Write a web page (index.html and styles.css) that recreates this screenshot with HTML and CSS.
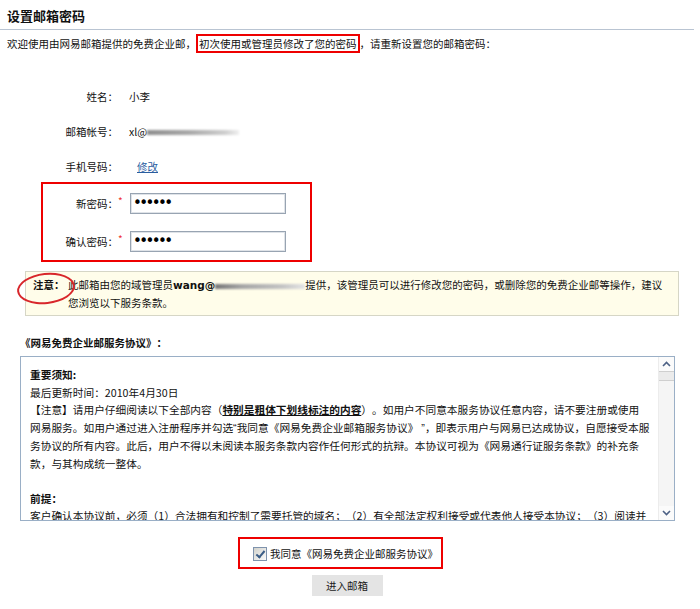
FILE: index.html
```html
<!DOCTYPE html>
<html lang="zh-CN">
<head>
  <meta charset="UTF-8" />
  <title>设置邮箱密码</title>
  <link rel="stylesheet" href="styles.css">
</head>
<body>
  <div class="page">
    <h1 class="page-title">设置邮箱密码</h1>
    <p class="intro">欢迎使用由网易邮箱提供的免费企业邮，<span class="mark">初次使用或管理员修改了您的密码</span>，请重新设置您的邮箱密码：</p>

    <!-- account info -->
    <div class="info">
      <div class="row"><span class="label">姓名：</span><span class="value">小李</span></div>
      <div class="row"><span class="label">邮箱帐号：</span><span class="value">xl@<span class="masked"></span></span></div>
      <div class="row"><span class="label">手机号码：</span><a class="value link" href="#">修改</a></div>
    </div>

    <!-- new password -->
    <div class="pwd-box">
      <div class="row">
        <label class="label" for="newPwd">新密码：</label><span class="req">*</span>
        <input id="newPwd" class="pwd" type="password" value="123456" />
      </div>
      <div class="row">
        <label class="label" for="confirmPwd">确认密码：</label><span class="req">*</span>
        <input id="confirmPwd" class="pwd" type="password" value="123456" />
      </div>
    </div>

    <div class="notice">
      <strong class="notice-tag">注意：</strong>
      <p class="notice-text">此邮箱由您的域管理员<b class="admin">wang@</b><span class="masked masked-domain"></span>提供，该管理员可以进行修改您的密码，或删除您的免费企业邮等操作，建议您浏览以下服务条款。</p>
      <span class="ring"></span>
    </div>

    <h2 class="terms-title">《网易免费企业邮服务协议》：</h2>
    <div class="terms">
      <!-- pre-wrapped agreement text -->
      <div class="terms-body">
        <p><b>重要须知:</b><br>
        最后更新时间：2010年4月30日<br>
        【注意】请用户仔细阅读以下全部内容（<b class="u">特别是粗体下划线标注的内容</b>）。如用户不同意本服务协议任意内容，请不要注册或使用<br>
        网易服务。如用户通过进入注册程序并勾选<span class="q">“</span>我同意《网易免费企业邮箱服务协议》<span class="q q-close">”</span>，即表示用户与网易已达成协议，自愿接受本服<br>
        务协议的所有内容。此后，用户不得以未阅读本服务条款内容作任何形式的抗辩。本协议可视为《网易通行证服务条款》的补充条<br>
        款，与其构成统一整体。</p>
        <p><b>前提：</b><br>
        客户确认本协议前，必须（1）合法拥有和控制了需要托管的域名；（2）有全部法定权利接受或代表他人接受本协议；（3）阅读并<br>
        理解本协议的全部条款。</p>
      </div>
      <div class="scrollbar">
        <span class="sb-btn"><svg width="9" height="6" viewBox="0 0 9 6"><polyline points="1,5 4.5,1.5 8,5" fill="none" stroke="#4d6185" stroke-width="1.6"/></svg></span>
        <span class="sb-thumb"></span>
        <span class="sb-track"></span>
        <span class="sb-btn"><svg width="9" height="6" viewBox="0 0 9 6"><polyline points="1,1 4.5,4.5 8,1" fill="none" stroke="#4d6185" stroke-width="1.6"/></svg></span>
      </div>
    </div>

    <div class="agree">
      <label class="agree-box"><input type="checkbox" class="agree-check" checked />我同意《网易免费企业邮服务协议》</label>
    </div>
    <div class="actions">
      <button type="submit" class="enter">进入邮箱</button>
    </div>
  </div>
</body>
</html>
```

FILE: styles.css
```css
body {
  margin: 0;
  background: #fff;
  color: #111;
  font-family: "Noto Sans CJK SC", "Liberation Sans", sans-serif;
  font-size: 10.5px;
  /* keep full-width punctuation at full width */
  text-spacing-trim: space-all;
}
.page {
  width: 694px;
}
/* header */
.page-title {
  margin: 0;
  padding: 8px 0 5px 7px;
  font-size: 13px;
  line-height: 16px;
  font-weight: bold;
  border-bottom: 1px solid #b9c4d2;
}
.intro {
  margin: 5px 0 0 7px;
  line-height: 18px;
}
.mark {
  border: 2px solid #e00;
  padding: 0 1px;
}
/* label / value rows */
.info {
  margin-top: 34px;
  display: flex;
  flex-direction: column;
  gap: 17px;
}
.row {
  display: flex;
  align-items: center;
  height: 18px;
}
.label {
  width: 118px;
  text-align: right;
  flex-shrink: 0;
}
.value {
  margin-left: 11px;
}
.link {
  margin-left: 19px;
  color: #2a5d9f;
  text-decoration: underline;
}
.masked {
  display: inline-block;
  width: 92px;
  height: 5px;
  vertical-align: middle;
  background: linear-gradient(to right, #8f8f8f, #a8a8a8 45%, #cfcfcf 85%, #f0f0f0);
  filter: blur(1px);
}
/* password fields */
.pwd-box {
  margin: 7px 0 0 41px;
  width: 271px;
  height: 80px;
  box-sizing: border-box;
  border: 2px solid #e00;
}
.pwd-box .row {
  height: 38px;
}
.pwd-box .label {
  width: 75px;
}
.req {
  width: 12px;
  flex-shrink: 0;
  align-self: flex-start;
  margin-top: 12px;
  color: #e33;
  font-size: 10px;
  line-height: 10px;
}
.pwd {
  width: 156px;
  height: 21px;
  box-sizing: border-box;
  margin: 0;
  padding: 0 2px;
  border: 1px solid #98a4b2;
  box-shadow: inset 0 0 0 1px #dfe3e8;
  font-family: "DejaVu Sans", sans-serif;
  font-size: 15px;
  letter-spacing: -2.6px;
  color: #000;
  outline: none;
}
/* notice */
.notice {
  position: relative;
  margin: 9px 0 0 25px;
  width: 654px;
  box-sizing: border-box;
  display: flex;
  padding: 4px 9px 3px 7px;
  line-height: 18px;
  background: #fffdea;
  border: 1px solid #d6d6c6;
}
.notice-tag {
  width: 35px;
  flex-shrink: 0;
}
.notice-text {
  margin: 0;
}
.admin {
  font-family: "DejaVu Sans", sans-serif;
}
.masked-domain {
  width: 90px;
  background: linear-gradient(to right, #777, #a5a5a5 30%, #c4c4c4 75%, #e4e4e4);
}
.ring {
  position: absolute;
  left: -9px;
  top: 1px;
  width: 54px;
  height: 27px;
  border: 2px solid #d8262b;
  border-radius: 50%;
  transform: rotate(-6deg);
}
/* terms */
.terms-title {
  margin: 18px 0 0 20px;
  font-size: 10.5px;
  line-height: 18px;
}
.terms {
  margin: 4px 0 0 20px;
  width: 655px;
  height: 165px;
  box-sizing: border-box;
  border: 1px solid #9aafc6;
  display: flex;
}
.terms-body {
  flex: 1;
  overflow: hidden;
  padding: 9px 8px 0 9px;
  font-size: 10.7px;
  line-height: 17.5px;
  white-space: nowrap;
}
.terms-body p {
  margin: 0 0 17.5px;
}
.u {
  text-decoration: underline;
}
/* narrow curly quotes */
.q {
  font-family: "Liberation Sans", sans-serif;
}
.q-close {
  margin-left: 3px;
}
.scrollbar {
  width: 15px;
  flex-shrink: 0;
  display: flex;
  flex-direction: column;
  background: #f5f5f5;
  border-left: 1px solid #ececec;
}
.sb-btn {
  height: 14px;
  display: flex;
  align-items: center;
  justify-content: center;
  background: #fbfbfb;
}
.sb-thumb {
  height: 8px;
  background: #ebebeb;
  border-top: 1px solid #cfcfcf;
  border-bottom: 1px solid #cfcfcf;
}
.sb-track {
  flex: 1;
}
/* agree + submit */
.agree {
  margin-top: 16px;
  padding-left: 238px;
}
.agree-box {
  display: inline-flex;
  align-items: center;
  height: 32px;
  box-sizing: border-box;
  border: 2px solid #e00;
  padding: 0 3px 0 13px;
}
.agree-check {
  appearance: none;
  -webkit-appearance: none;
  position: relative;
  margin: 2px 3px 0 0;
  width: 14px;
  height: 14px;
  border: 1px solid #7f93ad;
  background: linear-gradient(135deg, #d2d2cc, #fbfbfb);
}
.agree-check:checked::after {
  content: "";
  position: absolute;
  left: 4px;
  top: 1px;
  width: 3px;
  height: 7px;
  border: solid #3c5d86;
  border-width: 0 2px 2px 0;
  transform: rotate(40deg);
}
.actions {
  margin-top: 6px;
  text-align: center;
}
.enter {
  width: 71px;
  height: 21px;
  padding: 0;
  border: none;
  background: #e4e4e4;
  color: #1a1a1a;
  font-family: inherit;
  font-size: 10.5px;
}
```
